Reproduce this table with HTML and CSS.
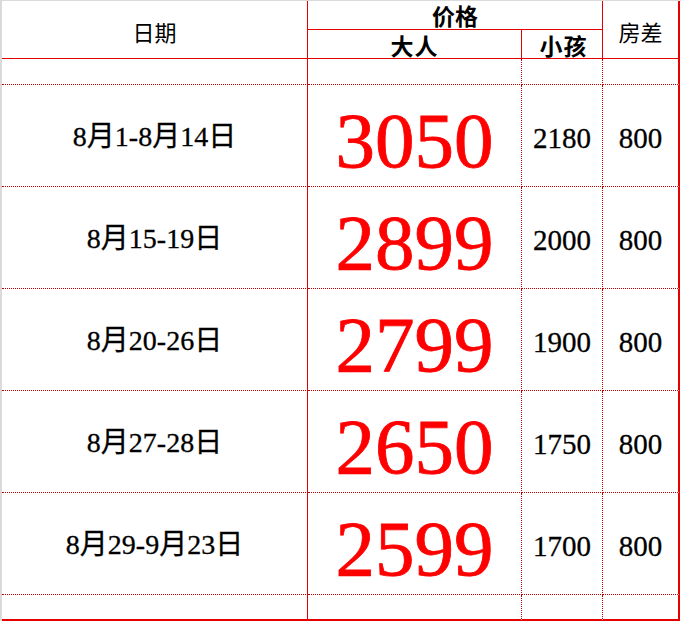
FILE: index.html
```html
<!DOCTYPE html>
<html lang="zh-CN">
<head>
<meta charset="utf-8">
<title>价格表</title>
<link rel="stylesheet" href="styles.css">
</head>
<body>
<div class="sheet">
  <div class="grid">
    <div class="c hd h-date">日期</div>
    <div class="c hd h-price bold">价格</div>
    <div class="c hd h-room">房差</div>
    <div class="c hd h-adult bold">大人</div>
    <div class="c hd h-child bold">小孩</div>

    <div class="c b1"></div>
    <div class="c b2"></div>
    <div class="c b3"></div>
    <div class="c b4"></div>

    <div class="c b1 date">8月1-8月14日</div>
    <div class="c b2 big">3050</div>
    <div class="c b3 num">2180</div>
    <div class="c b4 num">800</div>

    <div class="c b1 date">8月15-19日</div>
    <div class="c b2 big">2899</div>
    <div class="c b3 num">2000</div>
    <div class="c b4 num">800</div>

    <div class="c b1 date">8月20-26日</div>
    <div class="c b2 big">2799</div>
    <div class="c b3 num">1900</div>
    <div class="c b4 num">800</div>

    <div class="c b1 date">8月27-28日</div>
    <div class="c b2 big">2650</div>
    <div class="c b3 num">1750</div>
    <div class="c b4 num">800</div>

    <div class="c b1 date">8月29-9月23日</div>
    <div class="c b2 big">2599</div>
    <div class="c b3 num">1700</div>
    <div class="c b4 num">800</div>

    <div class="c b1 last"></div>
    <div class="c b2 last"></div>
    <div class="c b3 last"></div>
    <div class="c b4 last"></div>
  </div>
</div>
</body>
</html>
```

FILE: styles.css
```css
html, body {
  margin: 0;
  padding: 0;
  background: #ffffff;
}

.sheet {
  box-sizing: border-box;
  width: 681px;
  height: 621px;
  overflow: hidden;
  border-top: 1px solid #dadada;
  border-left: 2px solid #dadada;
  background: #ffffff;
}

.grid {
  display: grid;
  grid-template-columns: 306px 214px 81px 77px;
  grid-template-rows: 29px 29px 26px repeat(5, 102px) 26px;
  font-family: "Liberation Serif", "Noto Sans CJK SC", serif;
  color: #000000;
}

.c {
  box-sizing: border-box;
  display: flex;
  align-items: center;
  justify-content: center;
  white-space: nowrap;
  line-height: 1;
  border-right: 1px solid #e60000;
  border-bottom: 1px solid #e60000;
}

/* header */
.hd {
  font-family: "Noto Sans CJK SC", sans-serif;
  font-size: 22px;
}

.bold {
  font-weight: 700;
  font-size: 23px;
}

.h-date {
  grid-column: 1;
  grid-row: 1 / 3;
  padding-top: 3px;
}

.h-price {
  grid-column: 2 / 4;
  grid-row: 1;
  padding-top: 0;
}

.h-room {
  grid-column: 4;
  grid-row: 1 / 3;
  border-right: 2px solid #e60000;
  padding-top: 3px;
}

.h-adult {
  grid-column: 2;
  grid-row: 2;
  padding-top: 3px;
  letter-spacing: 1px;
}

.h-child {
  grid-column: 3;
  grid-row: 2;
  padding-top: 3px;
  letter-spacing: 1px;
  padding-left: 3px;
}

/* body cells */
.b1, .b2, .b3, .b4 {
  border-bottom: 1px dotted #c00000;
}

.b1 {
  border-right: 1px solid #e60000;
}

.b2, .b3 {
  border-right: 1px dotted #c00000;
}

.b4 {
  border-right: 2px solid #e60000;
}

.last {
  border-bottom: 2px solid #e60000;
}

.date {
  font-size: 28px;
  padding-top: 3px;
  -webkit-text-stroke: 0.3px #000000;
}

.big {
  font-size: 79px;
  color: #ff0000;
  padding-top: 10px;
  -webkit-text-stroke: 0.8px #ff0000;
}

.num {
  font-size: 29px;
  padding-top: 5px;
  -webkit-text-stroke: 0.3px #000000;
}
```
